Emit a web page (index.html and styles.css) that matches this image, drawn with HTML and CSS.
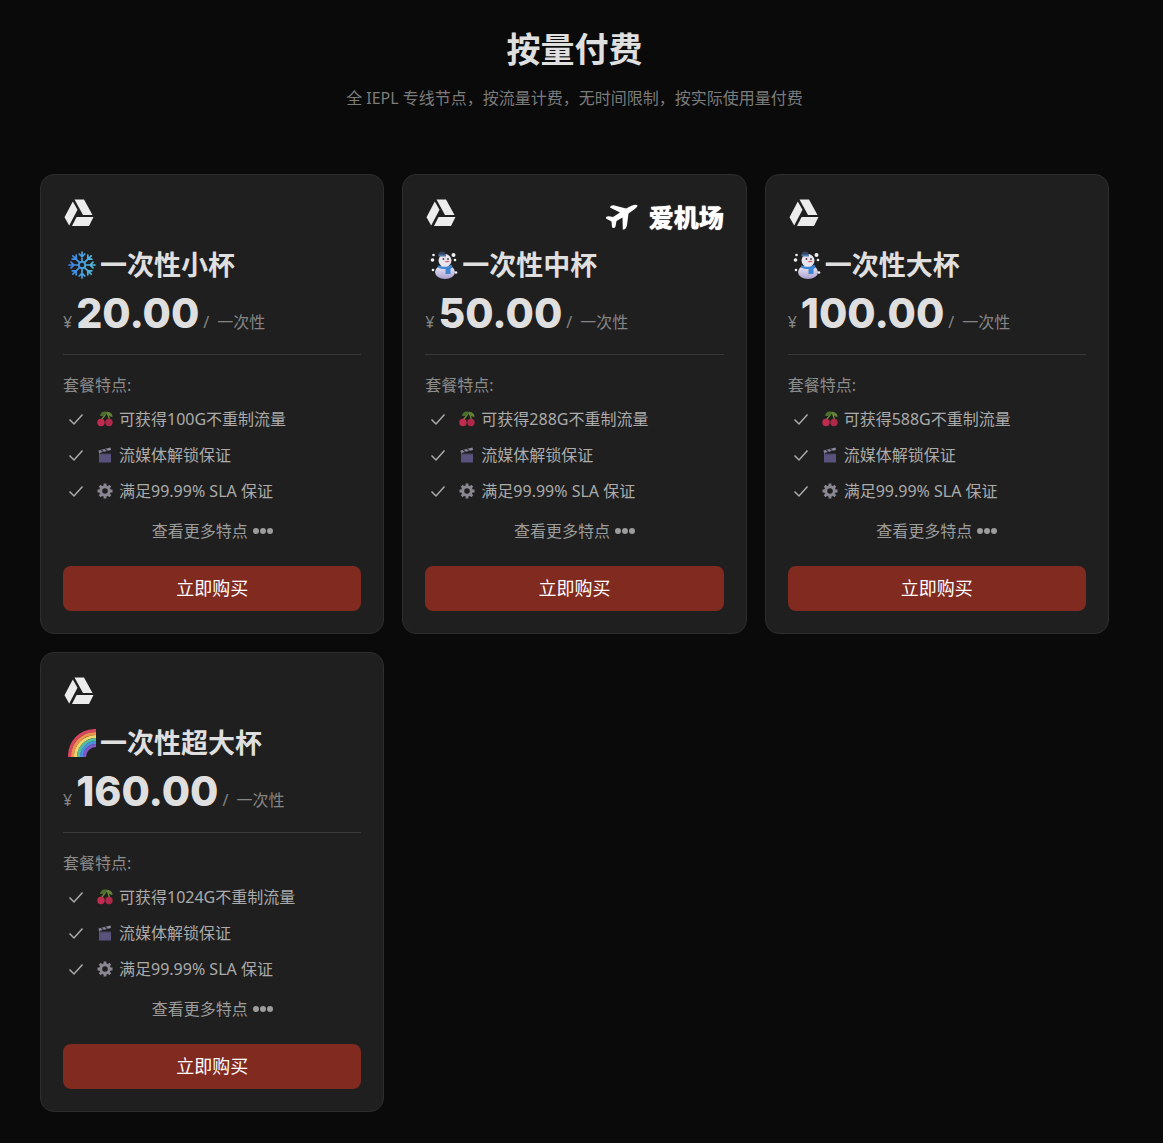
FILE: index.html
```
<!DOCTYPE html>
<html lang="zh-CN">
<head>
    <meta charset="UTF-8">
    <meta name="viewport" content="width=device-width, initial-scale=1.0">
    <title>按量付费</title>
    <link rel="stylesheet" href="styles.css">
</head>
<body>
    <!-- Icons -->
    <svg class="sprite" width="0" height="0" aria-hidden="true">
        <defs>
            <linearGradient id="snowGradient" gradientUnits="userSpaceOnUse" x1="0" y1="0" x2="28" y2="0">
                <stop offset="0" stop-color="#3b7fe8"/>
                <stop offset="1" stop-color="#52c3e0"/>
            </linearGradient>
            <linearGradient id="bodyGradient" x1="0" y1="0" x2="0" y2="1">
                <stop offset="0" stop-color="#f1eef5"/>
                <stop offset="1" stop-color="#a99fd0"/>
            </linearGradient>
        </defs>
        <symbol id="drive" viewBox="0 0 30 28">
            <path d="M10.5 0.5H20L28.5 16H19z"/>
            <path d="M8.8 2.5L13.5 10.8L5.2 26.5L0.5 18.2z"/>
            <path d="M12.6 18H29.5L25 27H8z"/>
        </symbol>
        <symbol id="snowflake" viewBox="0 0 28 28">
            <g fill="none" stroke="url(#snowGradient)" stroke-width="1.7" stroke-linecap="round">
                <circle cx="14" cy="14" r="3.2"/>
                <path d="M14 10.5V1M11.2 3L14 5.8L16.8 3M14 17.5V27M11.2 25L14 22.2L16.8 25"/>
                <path d="M10.5 14H1M3 11.2L5.8 14L3 16.8M17.500 14H27M25 11.2L22.2 14L25 16.8"/>
                <path d="M11.7 11.7L4.8 4.8M8.2 4.2V8.2H4.200M16.3 16.3L23.2 23.2M19.8 23.8V19.8H23.8"/>
                <path d="M16.3 11.7L23.2 4.8M19.8 4.2V8.2H23.8M11.7 16.3L4.8 23.2M8.2 23.8V19.8H4.2"/>
            </g>
        </symbol>
        <symbol id="snowman" viewBox="0 0 28 28">
            <g fill="#f2f2f2">
                <circle cx="3.5" cy="4" r="1.3"/>
                <circle cx="2.5" cy="9" r="1.8"/>
                <circle cx="3" cy="19" r="1.3"/>
                <circle cx="23.5" cy="4" r="2"/>
                <circle cx="25" cy="9" r="1.3"/>
                <circle cx="26" cy="21.5" r="1.3"/>
            </g>
            <ellipse cx="15" cy="21" rx="10" ry="7" fill="url(#bodyGradient)"/>
            <circle cx="15" cy="9.5" r="6.5" fill="#e9e5ec"/>
            <path d="M9 4.5C8 2 9 0.5 12 0.5C15 0.3 15.5 2 15.5 4.5z" fill="#34435f"/>
            <path d="M8.5 4.5H16" stroke="#5377a8" stroke-width="2"/>
            <path d="M8.5 14C12 16.5 17 16.5 21.5 13.5L22.5 16.5L20.5 18V23H15.5V18C12.5 18 10 17.5 8 16.5z" fill="#3e86d2"/>
            <circle cx="13.5" cy="8" r="0.9" fill="#433b48"/>
            <circle cx="18" cy="8" r="0.9" fill="#433b48"/>
            <path d="M14.5 10.5C17 9.5 19 9.7 20 10.5C18.5 11.5 16.5 11.7 14.5 10.5z" fill="#d5626a"/>
        </symbol>
        <symbol id="rainbow" viewBox="0 0 28 28">
            <g fill="none" stroke-width="3.1">
                <path d="M1.5 28C1.5 13 12 1.5 28 1.5" stroke="#d9455f"/>
                <path d="M4.5 28C4.5 15 14 4.5 28 4.5" stroke="#f0914f"/>
                <path d="M7.5 28C7.5 17 16 7.5 28 7.5" stroke="#f2d66b"/>
                <path d="M10.5 28C10.5 19 18 10.5 28 10.5" stroke="#54bd9c"/>
                <path d="M13.5 28C13.5 20.5 19.5 13.5 28 13.5" stroke="#4b8fe0"/>
                <path d="M16.5 28C16.5 22 21.5 16.5 28 16.5" stroke="#8158c6"/>
            </g>
        </symbol>
        <symbol id="plane" viewBox="0 0 34 28">
            <path d="M1 14C3 12.800 5 13.5 8 14L15 9.500L5 4.500C5.500 2.500 7.500 2 9.5 2.5L21 5.500L26.500 2.800C29.5 1.500 32 1.500 32.5 2.500C32.500 4 30 6 27 8L23.500 10.500L22 22C21.500 25 20 27 17.800 26.500L17.500 14.500L11.500 18L10.500 23.500C9.500 25.500 7.500 25.500 7 24L6.500 18.500L1 15.500z"/>
        </symbol>
        <symbol id="check" viewBox="0 0 16 16">
            <path d="M1.5 8.5L6 13L14.5 3.5" fill="none" stroke="currentColor" stroke-width="1.5"/>
        </symbol>
        <symbol id="cherry" viewBox="0 0 16 16">
            <path d="M4 9C6 7 8 4 10 1.5C11 4 12 6 12.5 9" fill="none" stroke="#77933c" stroke-width="1.2"/>
            <path d="M10 1C6 -0.5 3.5 1.5 3 5C6 5.5 9 4.5 10 1z" fill="#496f2b"/>
            <path d="M10 1C13.5 0.5 15.5 3 15.5 6C12.5 5.5 10.5 4 10 1z" fill="#63833a"/>
            <circle cx="4" cy="11.5" r="3.7" fill="#c22b50"/>
            <circle cx="12" cy="11.5" r="3.7" fill="#ad2849"/>
        </symbol>
        <symbol id="clapper" viewBox="0 0 16 16">
            <path d="M2 6H14V15.5H2z" fill="#58527c"/>
            <path d="M1.5 3.5L13.5 0.5L14 3L2 6z" fill="#8c899c"/>
            <path d="M4 3L6.5 4.8M8 2L10.5 3.8M3 6.7H14" stroke="#34323f" stroke-width="1.2"/>
        </symbol>
        <symbol id="gear" viewBox="0 0 16 16">
            <circle cx="8" cy="8" r="4.3" fill="none" stroke="#8b8792" stroke-width="3"/>
            <path d="M8 0.5V3M8 13V15.5M0.5 8H3M13 8H15.5M2.7 2.7L4.5 4.5M11.5 11.5L13.3 13.3M2.7 13.3L4.5 11.5M11.5 4.5L13.3 2.7" stroke="#8b8792" stroke-width="2.8"/>
        </symbol>
        <symbol id="dots" viewBox="0 0 20 8">
            <circle cx="3" cy="4" r="3"/>
            <circle cx="10" cy="4" r="3"/>
            <circle cx="17" cy="4" r="3"/>
        </symbol>
    </svg>

    <header class="page-header">
        <h1>按量付费</h1>
        <p>全 IEPL 专线节点，按流量计费，无时间限制，按实际使用量付费</p>
    </header>

    <main class="plans">
        <article class="card">
            <div class="card-top">
                <svg class="drive"><use href="#drive"/></svg>
            </div>
            <h2><svg class="emoji"><use href="#snowflake"/></svg>一次性小杯</h2>
            <p class="price"><span>¥</span><strong>20.00</strong><span>/</span><span class="period">一次性</span></p>
            <hr>
            <p class="label">套餐特点:</p>
            <ul class="features">
                <li><svg class="check"><use href="#check"/></svg><svg class="icon"><use href="#cherry"/></svg>可获得100G不重制流量</li>
                <li><svg class="check"><use href="#check"/></svg><svg class="icon"><use href="#clapper"/></svg>流媒体解锁保证</li>
                <li><svg class="check"><use href="#check"/></svg><svg class="icon"><use href="#gear"/></svg>满足99.99% SLA 保证</li>
            </ul>
            <button class="more" type="button">查看更多特点<svg class="dots"><use href="#dots"/></svg></button>
            <button class="buy" type="button">立即购买</button>
        </article>

        <article class="card">
            <div class="card-top">
                <svg class="drive"><use href="#drive"/></svg>
                <div class="brand"><svg class="plane"><use href="#plane"/></svg><span>爱机场</span></div>
            </div>
            <h2><svg class="emoji"><use href="#snowman"/></svg>一次性中杯</h2>
            <p class="price"><span>¥</span><strong>50.00</strong><span>/</span><span class="period">一次性</span></p>
            <hr>
            <p class="label">套餐特点:</p>
            <ul class="features">
                <li><svg class="check"><use href="#check"/></svg><svg class="icon"><use href="#cherry"/></svg>可获得288G不重制流量</li>
                <li><svg class="check"><use href="#check"/></svg><svg class="icon"><use href="#clapper"/></svg>流媒体解锁保证</li>
                <li><svg class="check"><use href="#check"/></svg><svg class="icon"><use href="#gear"/></svg>满足99.99% SLA 保证</li>
            </ul>
            <button class="more" type="button">查看更多特点<svg class="dots"><use href="#dots"/></svg></button>
            <button class="buy" type="button">立即购买</button>
        </article>

        <article class="card">
            <div class="card-top">
                <svg class="drive"><use href="#drive"/></svg>
            </div>
            <h2><svg class="emoji"><use href="#snowman"/></svg>一次性大杯</h2>
            <p class="price"><span>¥</span><strong>100.00</strong><span>/</span><span class="period">一次性</span></p>
            <hr>
            <p class="label">套餐特点:</p>
            <ul class="features">
                <li><svg class="check"><use href="#check"/></svg><svg class="icon"><use href="#cherry"/></svg>可获得588G不重制流量</li>
                <li><svg class="check"><use href="#check"/></svg><svg class="icon"><use href="#clapper"/></svg>流媒体解锁保证</li>
                <li><svg class="check"><use href="#check"/></svg><svg class="icon"><use href="#gear"/></svg>满足99.99% SLA 保证</li>
            </ul>
            <button class="more" type="button">查看更多特点<svg class="dots"><use href="#dots"/></svg></button>
            <button class="buy" type="button">立即购买</button>
        </article>

        <article class="card">
            <div class="card-top">
                <svg class="drive"><use href="#drive"/></svg>
            </div>
            <h2><svg class="emoji"><use href="#rainbow"/></svg>一次性超大杯</h2>
            <p class="price"><span>¥</span><strong>160.00</strong><span>/</span><span class="period">一次性</span></p>
            <hr>
            <p class="label">套餐特点:</p>
            <ul class="features">
                <li><svg class="check"><use href="#check"/></svg><svg class="icon"><use href="#cherry"/></svg>可获得1024G不重制流量</li>
                <li><svg class="check"><use href="#check"/></svg><svg class="icon"><use href="#clapper"/></svg>流媒体解锁保证</li>
                <li><svg class="check"><use href="#check"/></svg><svg class="icon"><use href="#gear"/></svg>满足99.99% SLA 保证</li>
            </ul>
            <button class="more" type="button">查看更多特点<svg class="dots"><use href="#dots"/></svg></button>
            <button class="buy" type="button">立即购买</button>
        </article>
    </main>
</body>
</html>
```
FILE: styles.css
```
* {
    box-sizing: border-box;
}
body {
    margin: 0;
    padding: 24px 54px 31px 40px;
    background-color: #0a0a0a;
    color: #dfdfdf;
    font-family: "Noto Sans", "Noto Sans CJK SC", sans-serif;
    font-size: 16px;
    line-height: 24px;
}
h1, h2, p, ul {
    margin: 0;
    padding: 0;
}
svg {
    flex: none;
    fill: currentColor;
}
button {
    border: none;
    font-family: inherit;
    cursor: pointer;
}
.sprite {
    position: absolute;
}
.page-header {
    margin-bottom: 64px;
    text-align: center;
}
.page-header h1 {
    margin-bottom: 12px;
    font-size: 34px;
    line-height: 50px;
}
.page-header p {
    color: #7c7c7c;
}
.plans {
    display: grid;
    grid-template-columns: repeat(3, 1fr);
    gap: 18px;
}
.card {
    display: flex;
    flex-direction: column;
    padding: 22px;
    background-color: #1f1f1f;
    border: 1px solid #2d2d2d;
    border-radius: 14px;
}
.card-top {
    display: flex;
    align-items: center;
    justify-content: space-between;
    height: 32px;
    margin-bottom: 18px;
    padding-left: 1px;
    color: #ececec;
}
.drive {
    width: 30px;
    height: 28px;
}
.brand {
    display: flex;
    align-items: center;
    gap: 10px;
    padding-top: 8px;
    color: #fff;
    font-size: 25px;
    font-weight: 900;
    text-shadow: 0 0 1px #fff;
}
.plane {
    width: 34px;
    height: 28px;
}
.card h2 {
    display: flex;
    align-items: center;
    gap: 4px;
    margin-bottom: 6px;
    padding-left: 5px;
    font-size: 27px;
    line-height: 36px;
}
.emoji {
    width: 28px;
    height: 28px;
}
.price {
    display: flex;
    align-items: baseline;
    gap: 4px;
    margin-bottom: 17px;
    color: #858585;
}
.price strong {
    color: #dfdfdf;
    font-family: Inter, sans-serif;
    font-size: 41px;
    font-weight: 800;
    line-height: 48px;
}
.price .period {
    margin-left: 4px;
}
hr {
    width: 100%;
    margin: 0 0 18px;
    border: none;
    border-top: 1px solid #393939;
}
.label {
    margin-bottom: 4px;
    color: #8c8c8c;
}
.features {
    list-style: none;
    color: #ababab;
}
.features li {
    display: flex;
    align-items: center;
    height: 36px;
    padding-left: 5px;
}
.check {
    width: 16px;
    height: 16px;
    margin-right: 13px;
}
.icon {
    width: 16px;
    height: 16px;
    margin-right: 6px;
}
.more {
    display: flex;
    align-items: center;
    align-self: center;
    gap: 5px;
    margin: 10px 0 23px;
    padding: 0;
    background: none;
    color: #9c9c9c;
    font-size: 16px;
    line-height: 24px;
}
.dots {
    width: 20px;
    height: 8px;
}
.buy {
    height: 45px;
    padding: 0 0 3px;
    background-color: #812a20;
    border-radius: 8px;
    color: #fff;
    font-size: 18px;
}
.buy:hover {
    background-color: #963226;
}
```
